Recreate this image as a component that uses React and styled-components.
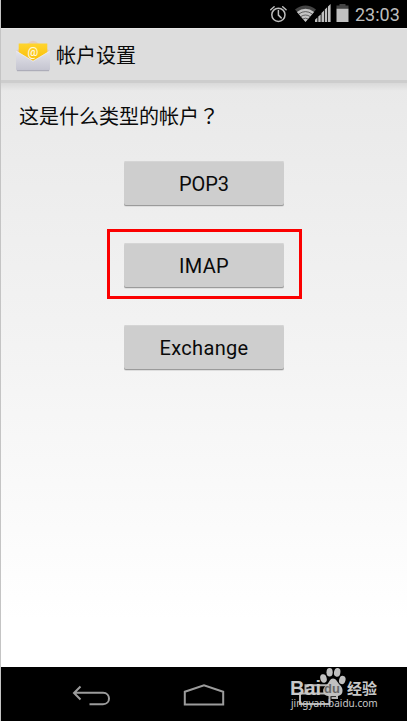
import React from "react";
import styled, { createGlobalStyle } from "styled-components";

const GlobalStyle = createGlobalStyle`
  * { box-sizing: border-box; }
  body { margin: 0; background: #fff; }
`;

const Screen = styled.div`
  width: 407px;
  height: 721px;
  display: flex;
  flex-direction: column;
  border-left: 1px solid #c4c4c4;
  overflow: hidden;
  color: #0a0a0a;
  font-family: Roboto, "Noto Sans CJK SC", sans-serif;
`;

const StatusBar = styled.header`
  height: 28px;
  flex: none;
  display: flex;
  justify-content: flex-end;
  align-items: center;
  padding-right: 8px;
  background: #000;
  color: #bdbdbd;
`;

const StatusIcons = styled.svg`
  display: block;
  width: 82px;
  height: 28px;
  margin-right: 4px;
`;

const Clock = styled.time`
  width: 44px;
  font-size: 18px;
  line-height: 28px;
  padding-top: 2px;
  white-space: nowrap;
`;

const TitleBar = styled.div`
  height: 55px;
  flex: none;
  display: flex;
  align-items: center;
  padding: 0 0 1px 14px;
  background: #ddd;
  border-top: 1px solid #e6e6e6;
  border-bottom: 3px solid #cdcdcd;
`;

const MailIcon = styled.svg`
  display: block;
  width: 36px;
  height: 36px;
  margin: 2px 5px 0 0;
`;

const Title = styled.h1`
  margin: 3px 0 0;
  font-size: 20px;
  font-weight: 400;
  line-height: 30px;
`;

const Content = styled.main`
  flex: 1;
  display: flex;
  flex-direction: column;
  align-items: center;
  background:
    linear-gradient(#d9d9d9, rgba(232, 232, 232, 0) 8px),
    linear-gradient(#e9e9e9, #f3f3f3 45%, #fff 92%);
`;

const Question = styled.p`
  align-self: flex-start;
  margin: 18px 0 0 18px;
  height: 30px;
  font-size: 20px;
  line-height: 30px;
`;

const CenteredMark = styled.span`
  font-family: "Noto Sans CJK TC", sans-serif;
`;

const Options = styled.div`
  display: flex;
  flex-direction: column;
  align-items: center;
  margin-top: 30px;
  gap: 23px;
`;

const OptionFrame = styled.div`
  padding: ${({ $marked }) => ($marked ? "11px 15px 8px 14px" : "0")};
  border: ${({ $marked }) => ($marked ? "3px solid #fb0000" : "0")};
  margin: ${({ $marked }) => ($marked ? "0 0 3px 1px" : "0")};
`;

const OptionButton = styled.button`
  display: block;
  width: 160px;
  height: 45px;
  padding: 1px 0 0;
  border: 0;
  border-radius: 2px;
  background: #cecece;
  box-shadow: inset 0 -1px #9b9b9b, inset 0 1px #d5d5d5, 0 1px #dedede;
  color: #0a0a0a;
  font: 400 20px/44px Roboto, sans-serif;
  letter-spacing: ${({ $spacing }) => $spacing || 0}px;
`;

const NavBar = styled.nav`
  position: relative;
  height: 54px;
  flex: none;
  display: flex;
  background: #000;
`;

const NavIcons = styled.svg`
  display: block;
  width: 406px;
  height: 54px;
`;

const Watermark = styled.div`
  position: absolute;
  left: 289px;
  top: 0;
  width: 96px;
  height: 54px;
`;

const Paw = styled.svg`
  position: absolute;
  left: 29px;
  top: 0;
  width: 30px;
  height: 32px;
`;

const WatermarkText = styled.span`
  position: absolute;
  left: ${({ $left }) => $left}px;
  top: ${({ $top }) => $top}px;
  color: ${({ $color }) => $color || "#c8c8c8"};
  font-family: ${({ $family }) => $family};
  font-size: ${({ $size }) => $size}px;
  font-weight: ${({ $weight }) => $weight || 400};
  line-height: ${({ $line }) => $line}px;
  white-space: nowrap;
`;

const accounts = [
  { name: "POP3" },
  { name: "IMAP", marked: true, spacing: 0.3 },
  { name: "Exchange", spacing: 0.35 },
];

function StatusGlyphs() {
  return (
    <StatusIcons viewBox="269 0 82 28" fill="none">
      <g stroke="#bdbdbd" strokeWidth="1.5" strokeLinecap="round">
        <circle cx="278.4" cy="14.8" r="6.6" />
        <path d="M278.4 10.5v4.6l2.8 2.8M270.7 9.7l3.4-3M286.1 9.7l-3.4-3" />
      </g>
      <path d="M295 9.6Q305.5 1.2 316 9.6L305.5 22Z" fill="#444" />
      <path d="M296.9 12Q305.5 5.4 314.1 12L305.5 22Z" fill="#c4c4c4" />
      <path d="M298.7 14q6.8-4.8 13.6 0M300.8 16.6q4.7-3.2 9.4 0M302.8 19q2.7-1.7 5.4 0" stroke="#333" strokeWidth=".7" />
      <path d="M315 22v-2.2l2.4-2.2V22zM318.3 22v-5.4l2.4-2.2V22zM321.5 22v-9l2.5-2.4V22zM324.8 22V9.6l2.4-2.3V22zM328 22V6.4l2.6-2.4V22z" fill="#c0c0c0" />
      <path d="M336.5 8.6V5.5h3V4h6v1.5h3v3.1z" fill="#444" />
      <path d="M336.5 8.6h12V22h-12z" fill="#c0c0c0" />
    </StatusIcons>
  );
}

function MailGlyph() {
  return (
    <MailIcon viewBox="15 37 36 36">
      <defs>
        <linearGradient id="letter" x2="0" y2="1">
          <stop stopColor="#ffd52e" />
          <stop offset="1" stopColor="#f9b800" />
        </linearGradient>
        <linearGradient id="pocket" x2="0" y2="1">
          <stop stopColor="#e4e4ea" />
          <stop offset="1" stopColor="#c3c3cf" />
        </linearGradient>
      </defs>
      <path d="M16 51 30.5 41.5Q33 40 35.5 41.5L50 51v18H16Z" fill="#e3cdbf" />
      <path d="M18.7 43.5h28.6V59L33 65 18.7 59Z" fill="url(#letter)" />
      <path d="M16 50.8 33 61 50 50.8V69q0 2-2 2H18q-2 0-2-2Z" fill="url(#pocket)" />
      <path d="M16.3 51.2 33 61.2l16.7-10" stroke="#f0f0f3" strokeWidth=".7" fill="none" />
      <path d="M17 70.7h32" stroke="#a8a8b4" strokeWidth="1" />
      <text x="33" y="56" textAnchor="middle" fontFamily="Roboto, sans-serif" fontSize="12" fontWeight="500" fill="#fff9df">@</text>
    </MailIcon>
  );
}

function NavGlyphs() {
  return (
    <NavIcons viewBox="1 667 406 54" fill="none" stroke="#9c9c9c" strokeWidth="2">
      <path d="M80.5 686.5 74 693l6.5 6.5M74 692.8h29c8 0 8 11.4 0 11.4H89.5" />
      <path d="M184.8 691.8 204 685.3l19.2 6.5v12.6h-38.4Z" />
      <path d="M305.5 693.5v-8.2H337v12.6h-5.5M300 693.5h29.5V704H300Z" stroke="#b5b5b5" />
    </NavIcons>
  );
}

export default function App() {
  return (
    <>
      <GlobalStyle />
      <Screen>
        <StatusBar>
          <StatusGlyphs />
          <Clock>23:03</Clock>
        </StatusBar>
        <TitleBar>
          <MailGlyph />
          <Title>帐户设置</Title>
        </TitleBar>
        <Content>
          <Question>
            这是什么类型的帐户<CenteredMark lang="zh-TW">？</CenteredMark>
          </Question>
          <Options>
            {accounts.map(({ name, marked, spacing }) => (
              <OptionFrame key={name} $marked={marked}>
                <OptionButton $spacing={spacing}>{name}</OptionButton>
              </OptionFrame>
            ))}
          </Options>
        </Content>
        <NavBar>
          <NavGlyphs />
          <Watermark>
            <Paw viewBox="319 667 30 32" fill="#c0c0c0">
              <ellipse cx="323.5" cy="678.5" rx="3.2" ry="4.3" transform="rotate(-15 323.5 678.5)" />
              <ellipse cx="329.6" cy="672.2" rx="3.1" ry="4.3" />
              <ellipse cx="337.2" cy="672.4" rx="3.2" ry="4.4" transform="rotate(10 337.2 672.4)" />
              <ellipse cx="342.3" cy="680" rx="3.2" ry="4.2" transform="rotate(15 342.3 680)" />
              <path d="M333 678.5c3 0 4 3 6 5.5 3 3 4 5 3.4 8-.6 3.5-3.7 4.5-9.4 4.3-6 .2-9.4-1-9.8-4.5-.4-3 1-4.7 3.8-7.3 2.5-2.5 3-6 6-6Z" />
            </Paw>
            <WatermarkText $left={0} $top={13} $line={16} $size={20} $weight={700} $family='"Liberation Sans", sans-serif'>Bai</WatermarkText>
            <WatermarkText $left={34} $top={15} $line={14} $size={13} $weight={700} $color="#666" $family='"Liberation Sans", sans-serif'>du</WatermarkText>
            <WatermarkText $left={57} $top={12} $line={17} $size={15} $weight={700} $family='"Noto Sans CJK SC", sans-serif'>经验</WatermarkText>
            <WatermarkText $left={1} $top={30} $line={12} $size={10} $family='"Noto Sans", sans-serif'>jingyan.baidu.com</WatermarkText>
          </Watermark>
        </NavBar>
      </Screen>
    </>
  );
}
